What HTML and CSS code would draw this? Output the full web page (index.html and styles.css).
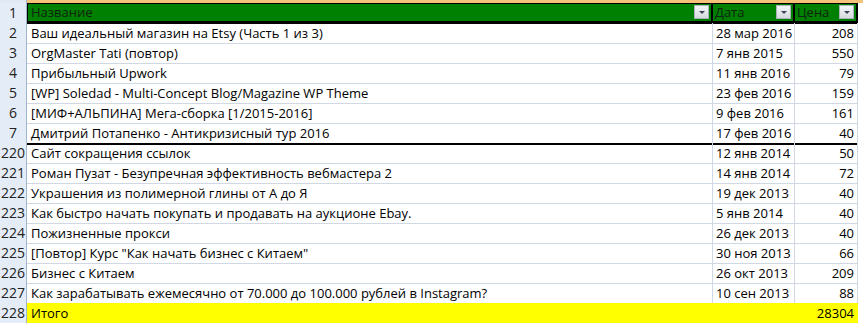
FILE: index.html
```html
<!DOCTYPE html>
<html lang="ru">
<head>
<meta charset="utf-8">
<link rel="stylesheet" href="styles.css">
</head>
<body>
<div class="sheet">
  <div class="top-strip"><span class="rh-top"></span><span class="col-top"></span></div>
  <div class="row header">
    <div class="rh">1</div>
    <div class="c name">Название<span class="dd"></span></div>
    <div class="c date">Дата<span class="dd"></span></div>
    <div class="c price">Цена<span class="dd"></span></div>
  </div>
  <div class="row"><div class="rh">2</div><div class="c name">Ваш идеальный магазин на Etsy (Часть 1 из 3)</div><div class="c date">28 мар 2016</div><div class="c price">208</div></div>
  <div class="row"><div class="rh">3</div><div class="c name">OrgMaster Tati (повтор)</div><div class="c date">7 янв 2015</div><div class="c price">550</div></div>
  <div class="row"><div class="rh">4</div><div class="c name">Прибыльный Upwork</div><div class="c date">11 янв 2016</div><div class="c price">79</div></div>
  <div class="row"><div class="rh">5</div><div class="c name">[WP] Soledad - Multi-Concept Blog/Magazine WP Theme</div><div class="c date">23 фев 2016</div><div class="c price">159</div></div>
  <div class="row"><div class="rh">6</div><div class="c name">[МИФ+АЛЬПИНА] Мега-сборка [1/2015-2016]</div><div class="c date">9 фев 2016</div><div class="c price">161</div></div>
  <div class="row split"><div class="rh">7</div><div class="c name">Дмитрий Потапенко - Антикризисный тур 2016</div><div class="c date">17 фев 2016</div><div class="c price">40</div></div>
  <div class="row"><div class="rh">220</div><div class="c name">Сайт сокращения ссылок</div><div class="c date">12 янв 2014</div><div class="c price">50</div></div>
  <div class="row"><div class="rh">221</div><div class="c name">Роман Пузат - Безупречная эффективность вебмастера 2</div><div class="c date">14 янв 2014</div><div class="c price">72</div></div>
  <div class="row"><div class="rh">222</div><div class="c name">Украшения из полимерной глины от А до Я</div><div class="c date">19 дек 2013</div><div class="c price">40</div></div>
  <div class="row"><div class="rh">223</div><div class="c name">Как быстро начать покупать и продавать на аукционе Ebay.</div><div class="c date">5 янв 2014</div><div class="c price">40</div></div>
  <div class="row"><div class="rh">224</div><div class="c name">Пожизненные прокси</div><div class="c date">26 дек 2013</div><div class="c price">40</div></div>
  <div class="row"><div class="rh">225</div><div class="c name">[Повтор] Курс "Как начать бизнес с Китаем"</div><div class="c date">30 ноя 2013</div><div class="c price">66</div></div>
  <div class="row"><div class="rh">226</div><div class="c name">Бизнес с Китаем</div><div class="c date">26 окт 2013</div><div class="c price">209</div></div>
  <div class="row"><div class="rh">227</div><div class="c name">Как зарабатывать ежемесячно от 70.000 до 100.000 рублей в Instagram?</div><div class="c date">10 сен 2013</div><div class="c price">88</div></div>
  <div class="row total"><div class="rh">228</div><div class="c name">Итого</div><div class="c date"></div><div class="c price">28304</div></div>
</div>
</body>
</html>
```
FILE: styles.css
```css
html, body {
  margin: 0;
  padding: 0;
  background: #ffffff;
}
.sheet {
  width: 863px;
  height: 323px;
  overflow: hidden;
  font-family: "Open Sans", "Liberation Sans", sans-serif;
  font-size: 13px;
  color: #000;
}
.top-strip {
  display: flex;
  height: 3px;
}
.rh-top {
  width: 27px;
  background: #dfe8f3;
  border-right: 1px solid #9eb6ce;
  box-sizing: border-box;
}
.col-top {
  flex: 1;
  background: #f5c27a;
}
.row {
  display: grid;
  grid-template-columns: 27px 686px 82px 63px 5px;
  height: 20px;
}
.row::after {
  content: "";
  background: #fff;
}
.rh {
  background: #e4ecf7;
  border-right: 1px solid #9eb6ce;
  border-bottom: 1px solid #9eb6ce;
  box-sizing: border-box;
  text-align: center;
  line-height: 20px;
  color: #222;
  font-size: 14px;
}
.c {
  box-sizing: border-box;
  border-right: 1px solid #d0d7e5;
  border-bottom: 1px solid #d0d7e5;
  line-height: 20px;
  padding: 0 3px;
  white-space: nowrap;
  overflow: visible;
  position: relative;
}
.c.name {
  padding-left: 4px;
}
.price {
  text-align: right;
}
.header .c {
  background: #008000;
  border-top: 1px solid #000;
  border-right: 2px solid #000;
  border-bottom: 3px solid #000;
  color: #10240f;
  line-height: 17px;
  text-align: left;
  padding-left: 2px;
}
.header .c.name {
  border-left: 1px solid #000;
  padding-left: 3px;
}
.dd {
  position: absolute;
  right: 2px;
  top: 1px;
  width: 15px;
  height: 14px;
  box-sizing: border-box;
  border: 1px solid #a9b0ba;
  background: linear-gradient(#f4f5f7, #d6d9de);
}
.dd::after {
  content: "";
  position: absolute;
  left: 4px;
  top: 5px;
  border-left: 3px solid transparent;
  border-right: 3px solid transparent;
  border-top: 3px solid #3a4456;
}
.split .c {
  border-bottom: 2px solid #000;
}
.total .c {
  background: #ffff00;
  border-right-color: #ffff00;
  border-bottom-color: #ffff00;
}
```
